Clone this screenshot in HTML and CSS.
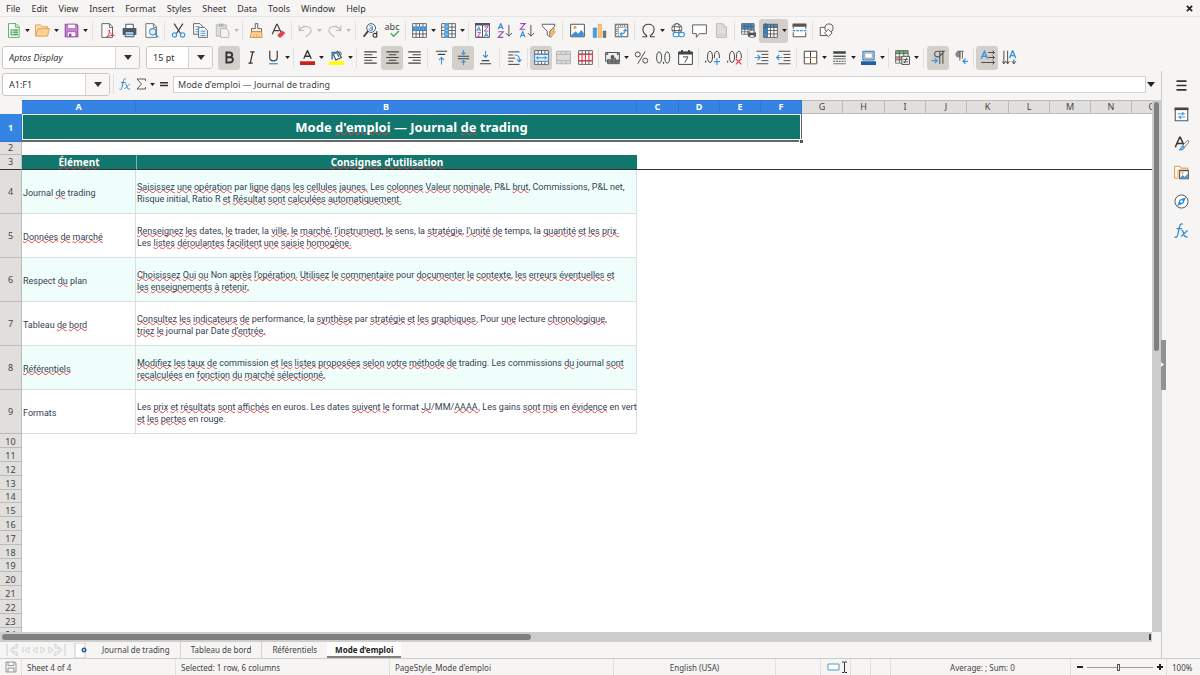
FILE: index.html
```html
<!DOCTYPE html>
<html lang="fr">
<head>
<meta charset="utf-8">
<title>Journal de trading</title>
<link rel="stylesheet" href="styles.css">
</head>
<body>
<svg class="defs" aria-hidden="true">
<symbol id="caret" viewBox="0 0 8 5"><path d="M0 0h8L4 5z" fill="currentColor"/></symbol>
<symbol id="new" viewBox="0 0 24 24"><path d="M4 1h12l5 5v17H4z" fill="#fff" stroke="#56b264" stroke-width="1.6"/><path d="M15 1v6h6" fill="#c9ebce" stroke="#56b264" stroke-width="1.4"/><path d="M7 10h12v10H7z" fill="#56a562"/><path d="M7 13h12M7 16.500h12M11 10v10" stroke="#fff"/></symbol>
<symbol id="open" viewBox="0 0 24 24"><path d="M1 21V3h8l2 3h9v4" fill="#fbe0b4" stroke="#e0a050" stroke-width="1.5"/><path d="M1 21 5 9h18l-3 12z" fill="#fcd191" stroke="#e0a050" stroke-width="1.5"/></symbol>
<symbol id="save" viewBox="0 0 24 24"><path d="M2 2h18l2 2v18H2z" fill="#c58ad0" stroke="#9c4bab" stroke-width="1.8"/><path d="M6 2h12v7H6z" fill="#fff" stroke="#9c4bab"/><path d="M5 14h14v8H5z" fill="#fff" stroke="#9c4bab" stroke-width="1.4"/><path d="M8 17v5h4v-5z" fill="#9c4bab"/></symbol>
<symbol id="pdf" viewBox="0 0 24 24"><path d="M3 1h12l5 5v17H3z" fill="#fcfcfc" stroke="#555" stroke-width="1.4"/><path d="M15 1v6h5" fill="none" stroke="#555" stroke-width="1.4"/><path d="M10 23c4-3 6-8 5-12-2 0 0 7 8 9-4-1-9 0-13 3" fill="#fff" stroke="#e0394a" stroke-width="1.5"/></symbol>
<symbol id="print" viewBox="0 0 24 24"><path d="M6 2h12v7H6z" fill="#fff" stroke="#4b5a66" stroke-width="1.6"/><path d="M1 8h22v11H1z" fill="#4b5a66"/><path d="M5 14h14v8H5z" fill="#d7ecfb" stroke="#374550" stroke-width="1.5"/><path d="M6 18h12" stroke="#3a8cd0" stroke-width="2"/></symbol>
<symbol id="preview" viewBox="0 0 24 24"><path d="M3 1h12l5 5v17H3z" fill="#fcfcfc" stroke="#666" stroke-width="1.4"/><path d="M15 1v6h5" fill="none" stroke="#666" stroke-width="1.4"/><circle cx="14" cy="14" r="5" fill="#e3f1fb" stroke="#3f94d2" stroke-width="1.7"/><path d="m18 18 5 5" stroke="#3f94d2" stroke-width="2"/></symbol>
<symbol id="cut" viewBox="0 0 24 24"><path d="m5 1 11 17M19 1 8 18" stroke="#444" stroke-width="2"/><circle cx="5.500" cy="19" r="3.500" fill="none" stroke="#3f94d2" stroke-width="1.8"/><circle cx="18.500" cy="19" r="3.500" fill="none" stroke="#3f94d2" stroke-width="1.8"/></symbol>
<symbol id="copy" viewBox="0 0 24 24"><path d="M1 1h10l4 4v13H1z" fill="#fff" stroke="#555" stroke-width="1.4"/><path d="M4 6h6M4 10h4M4 14h4" stroke="#3f94d2" stroke-width="1.6"/><path d="M9 7h9l5 5v11H9z" fill="#fff" stroke="#555" stroke-width="1.4"/><path d="M12 13h8M12 16.500h8M12 20h8" stroke="#3f94d2" stroke-width="1.6"/></symbol>
<symbol id="paste" viewBox="0 0 24 24"><path d="M2 3h16v18H2z" fill="#ddd" stroke="#b5b5b5" stroke-width="1.5"/><path d="M6 1h8v5H6z" fill="#b5b5b5"/><path d="M9 9h9l4 4v10H9z" fill="#f3f3f3" stroke="#b5b5b5" stroke-width="1.5"/></symbol>
<symbol id="clone" viewBox="0 0 24 24"><path d="M10 1h4v8h6v5H4V9h6z" fill="#f7f7f7" stroke="#555" stroke-width="1.4"/><path d="M4 14h16l1 9H2z" fill="#fbd9a5" stroke="#de8e31" stroke-width="1.5"/><path d="M8 23v-5m4 5v-5m4 5v-5" stroke="#de8e31"/></symbol>
<symbol id="clear" viewBox="0 0 24 24"><path d="m2 18 7-16h1l6 13M5 12h8" fill="none" stroke="#444" stroke-width="2"/><path d="m10 19 8-7 5 4-7 7h-3z" fill="#e9414b"/></symbol>
<symbol id="undo" viewBox="0 0 24 24"><path d="M2 4v8h8M3 11C8 3 20 4 21 12c0 5-5 7-9 10" fill="none" stroke="currentColor" stroke-width="1.8"/></symbol>
<symbol id="redo" viewBox="0 0 24 24"><path d="M22 4v8h-8M21 11C16 3 4 4 3 12c0 5 5 7 9 10" fill="none" stroke="currentColor" stroke-width="1.8"/></symbol>
<symbol id="grid" viewBox="0 0 24 24"><path d="M1 1h22v22H1z" fill="#fff"/><path d="M1 1h22v22H1zM1 6.500h22M1 12h22M1 17.500h22M6.500 1v22M12 1v22M17.500 1v22" fill="none" stroke="#555" stroke-width="1.4"/></symbol>
<symbol id="row" viewBox="0 0 24 24"><use href="#grid"/><path d="M0 6h24v6H0z" fill="#3b94dd"/><path d="M6 6v6M12 6v6M18 6v6" stroke="#79b8ea"/></symbol>
<symbol id="col" viewBox="0 0 24 24"><use href="#grid"/><path d="M6 0h6v24H6z" fill="#4fa2e2"/><path d="M6 6h6M6 12h6M6 18h6" stroke="#b4dafa"/></symbol>
<symbol id="sort" viewBox="0 0 24 24"><path d="M1 1h22v22H1zM12 1v22" fill="#fff" stroke="#555" stroke-width="1.6"/><path d="M0 0h24v4H0z" fill="#555"/><g fill="none" stroke-width="1.5"><path d="m3 13 3-7 3 7M4 11h4M15 22l3-7 3 7m-5-2h4" stroke="#2f8bd3"/><path d="M4 15h5l-5 7h5M15 6h6l-6 7h6" stroke="#a444b2"/></g></symbol>
<symbol id="asc" viewBox="0 0 24 24"><path d="m2 10 4-9 4 9M3 7h6" fill="none" stroke="#2f8bd3" stroke-width="1.8"/><path d="M2 14h8L2 23h8" fill="none" stroke="#a444b2" stroke-width="1.8"/><path d="M19 3v18m-5-5 5 5 5-5" fill="none" stroke="#555" stroke-width="1.6"/></symbol>
<symbol id="desc" viewBox="0 0 24 24"><path d="m2 23 4-9 4 9M3 20h6" fill="none" stroke="#2f8bd3" stroke-width="1.8"/><path d="M2 1h8l-8 9h8" fill="none" stroke="#a444b2" stroke-width="1.8"/><path d="M19 3v18m-5-5 5 5 5-5" fill="none" stroke="#555" stroke-width="1.6"/></symbol>
<symbol id="filter" viewBox="0 0 24 24"><path d="M2 2h20v3l-8 8v9l-4-3v-6L2 5z" fill="#fff" stroke="#555" stroke-width="1.5"/><path d="m18 9-4 8h4l-3 7 8-10h-4l3-5z" fill="#f8c98b" stroke="#e08a2a" stroke-width="1.200"/></symbol>
<symbol id="image" viewBox="0 0 24 24"><path d="M1 2h22v20H1z" fill="#fff" stroke="#555" stroke-width="1.6"/><path d="m2 19 7-6 4 4 5-6 4 5v5H2z" fill="#3b94dd"/><circle cx="8" cy="7" r="2.500" fill="#f0a244"/></symbol>
<symbol id="chart" viewBox="0 0 24 24"><path d="M2 8h5v15H2z" fill="#4fa2e2" stroke="#2a7ab9"/><path d="M10 2h5v21h-5z" fill="#f9c988" stroke="#e29434"/><path d="M18 13h4v10h-4z" fill="#777" stroke="#444"/></symbol>
<symbol id="pivot" viewBox="0 0 24 24"><path d="M2 2h20v20H2z" fill="#fff" stroke="#555" stroke-width="1.6"/><path d="M7 2v20M2 7h20" stroke="#777"/><path d="M3 3h3M9 4.500h11M4.500 9v11" stroke="#888" stroke-width="3" stroke-dasharray="2 1.5"/><path d="M10 18c5 0 8-3 8-8m-3 3 3-3 3 3m-8 2-3 3 3 3" fill="none" stroke="#3b94dd" stroke-width="1.8"/></symbol>
<symbol id="omega" viewBox="0 0 24 24"><path d="M2 22h7v-2C4 17 3 13 3 10c0-5 4-8 9-8s9 3 9 8c0 3-1 7-6 10v2h7" fill="none" stroke="#444" stroke-width="1.8"/></symbol>
<symbol id="link" viewBox="0 0 24 24"><circle cx="11" cy="9" r="8" fill="#fff" stroke="#555" stroke-width="1.400"/><ellipse cx="11" cy="9" rx="4" ry="8" fill="none" stroke="#555" stroke-width="1.400"/><path d="M3 6h16M3 12h16" stroke="#555" stroke-width="1.400"/><rect x="5" y="15" width="10" height="7" rx="3.500" fill="#fff" stroke="#3b94dd" stroke-width="1.800"/><rect x="14" y="15" width="9" height="7" rx="3.500" fill="#fff" stroke="#3b94dd" stroke-width="1.800"/></symbol>
<symbol id="comment" viewBox="0 0 24 24"><path d="M1 3h22v14H12l-5 6v-6H1z" fill="#fff" stroke="#555" stroke-width="1.500"/></symbol>
<symbol id="page" viewBox="0 0 24 24"><path d="M4 1h10l6 6v16H4z" fill="#ddd" stroke="#bbb" stroke-width="1.500"/><path d="M14 1v6h6M4 19h16" fill="none" stroke="#bbb"/></symbol>
<symbol id="printarea" viewBox="0 0 24 24"><path d="M1 1h20v17H1z" fill="#fff"/><path d="M1 1h20v9H1z" fill="#3b94dd"/><path d="M1 1h20v17H1zM1 5.500h20M1 10h20M1 14h20M6 1v17M11 1v17M16 1v17" fill="none" stroke="#555" stroke-width="1.200"/><path d="M11 15h13v7H11z" fill="#4b5a66"/><path d="M14 12h7v4h-7zM14 19h7v4h-7z" fill="#fff" stroke="#444"/></symbol>
<symbol id="freeze" viewBox="0 0 24 24"><path d="M1 2h22v21H1z" fill="#fff"/><path d="M1 2h22v5H1zM1 2h6v21H1z" fill="#3b94dd"/><path d="M7 12h16M7 17.500h16M12 2v21M17.500 2v21M1 2h22v21H1zM7 2v21M1 7h22" fill="none" stroke="#555" stroke-width="1.400"/><path d="m1 7 6 6m-6 0 6 5M4 0v7" stroke="#1961a0" stroke-width="1.400"/></symbol>
<symbol id="split" viewBox="0 0 24 24"><path d="M2 9V2h20v7M2 15v7h20v-7" fill="#fff" stroke="#555" stroke-width="1.600"/><path d="M1 1h22v5H1z" fill="#555"/><path d="M1 12h22" stroke="#3b94dd" stroke-width="2" stroke-dasharray="4 2"/></symbol>
<symbol id="shapes" viewBox="0 0 24 24"><path d="M2 7h13v13H2z" fill="#fff" stroke="#555" stroke-width="1.500"/><circle cx="16" cy="8" r="6.500" fill="#f6f5f4" stroke="#555" stroke-width="1.500"/><path d="m15 10 6 6-6 6-6-6z" fill="#fff" stroke="#555" stroke-width="1.500"/></symbol>
<symbol id="bold" viewBox="0 0 24 24"><path d="M7 4v16h5c7 0 7-8 1-8.500C18 10 17 4 12 4zM7 11.500h6" fill="none" stroke="#333" stroke-width="3"/></symbol>
<symbol id="italic" viewBox="0 0 24 24"><path d="M10 3h7M7 21h7m0-18-4 18" stroke="#333" stroke-width="2"/></symbol>
<symbol id="under" viewBox="0 0 24 24"><path d="M6 1v11c0 7 12 7 12 0V1" fill="none" stroke="#444" stroke-width="2"/><path d="M5 22h14" stroke="#3b94dd" stroke-width="2"/></symbol>
<symbol id="fcolor" viewBox="0 0 24 24"><path d="m6 14 6-13 6 13M8 10h8" fill="none" stroke="#333" stroke-width="2.200"/><path d="M0 18h24v6H0z" fill="#c9211e"/></symbol>
<symbol id="hcolor" viewBox="0 0 24 24"><path d="m7 7 7-5 6 10-9 4z" fill="#fff" stroke="#444" stroke-width="1.700"/><path d="M5 15V4h7l4 7" fill="none" stroke="#2174b8" stroke-width="2.200"/><path d="M15 5c3-4 5-1 4 3" fill="none" stroke="#444" stroke-width="1.500"/><path d="M0 18h24v6H0z" fill="#ff0"/></symbol>
<symbol id="left" viewBox="0 0 24 24"><path d="M2 3h20M2 7.500h13M2 12h20M2 16.500h13M2 21h20" stroke="#444" stroke-width="1.700"/></symbol>
<symbol id="center" viewBox="0 0 24 24"><path d="M2 3h20M6 7.500h12M2 12h20M6 16.500h12M2 21h20" stroke="#444" stroke-width="1.700"/></symbol>
<symbol id="right" viewBox="0 0 24 24"><path d="M2 3h20M9 7.500h13M2 12h20M9 16.500h13M2 21h20" stroke="#444" stroke-width="1.700"/></symbol>
<symbol id="vtop" viewBox="0 0 24 24"><path d="M3 2h18M6 7h12" stroke="#444" stroke-width="1.700"/><path d="M12 23V12m-4 4 4-4 4 4" fill="none" stroke="#3b94dd" stroke-width="1.700"/></symbol>
<symbol id="vmid" viewBox="0 0 24 24"><path d="M3 10h18M3 14h18" stroke="#444" stroke-width="1.700"/><path d="M12 0v7M9 4l3 3 3-3m-3 20v-7m-3 3 3-3 3 3" fill="none" stroke="#3b94dd" stroke-width="1.700"/></symbol>
<symbol id="vbot" viewBox="0 0 24 24"><path d="M6 17h12M3 22h18" stroke="#444" stroke-width="1.700"/><path d="M12 1v11M8 8l4 4 4-4" fill="none" stroke="#3b94dd" stroke-width="1.700"/></symbol>
<symbol id="wraptext" viewBox="0 0 24 24"><path d="M2 3h18M2 8h8M2 13h11M2 18h8M2 23h18" stroke="#444" stroke-width="1.600"/><path d="M12 8c7 0 8 3 8 10m-4-3 4 4 3-4" fill="none" stroke="#3b94dd" stroke-width="1.900"/></symbol>
<symbol id="merge" viewBox="0 0 24 24"><use href="#grid"/><path d="M1 7h22v11H1z" fill="#e7f3fc" stroke="#2f8bd3" stroke-width="1.500"/><path d="M4 12.500h16M7 10l-3 2.500L7 15m10-5 3 2.500-3 2.500" fill="none" stroke="#2f8bd3" stroke-width="1.600"/></symbol>
<symbol id="mergeoff" viewBox="0 0 24 24"><path d="M1 2h22v20H1z" fill="#ddd"/><path d="M1 2h22v20H1zM1 7h22M1 17h22M8 2v5m8-5v5M8 17v5m8-5v5" fill="none" stroke="#b3b3b3" stroke-width="1.600"/></symbol>
<symbol id="unmerge" viewBox="0 0 24 24"><use href="#grid"/><path d="M1 7h22v10H1zM6.500 7v10M12 7v10M17.500 7v10" fill="#fff" stroke="#d8434d" stroke-width="1.900"/></symbol>
<symbol id="money" viewBox="0 0 24 24"><path d="M1 4h22v14H1z" fill="#eee" stroke="#555" stroke-width="1.600"/><path d="M2 5h3v3H2zM19 5h3v3h-3z" fill="#555"/><circle cx="12" cy="11" r="3" fill="#555"/><path d="M4 15h7v7H4zM12 13h5v9h-5zM18 16h5v6h-5z" fill="#777" stroke="#444"/></symbol>
<symbol id="percent" viewBox="0 0 24 24"><circle cx="6" cy="7" r="4" fill="none" stroke="#444" stroke-width="1.500"/><circle cx="18" cy="17" r="4" fill="none" stroke="#444" stroke-width="1.500"/><path d="M18 2 6 22" stroke="#444" stroke-width="1.500"/></symbol>
<symbol id="number" viewBox="0 0 24 24"><ellipse cx="5" cy="12" rx="4" ry="9" fill="none" stroke="#444" stroke-width="1.600"/><ellipse cx="18" cy="12" rx="4" ry="9" fill="none" stroke="#444" stroke-width="1.600"/><path d="M11 19h2v3h-2z" fill="#444"/></symbol>
<symbol id="date" viewBox="0 0 24 24"><path d="M1 3h22v20H1z" fill="#fff" stroke="#444" stroke-width="1.600"/><path d="M1 3h22v4H1zM5 0h3v4H5zM16 0h3v4h-3z" fill="#444"/><path d="M8 11h8l-5 9" fill="none" stroke="#444" stroke-width="1.600"/></symbol>
<symbol id="decs" viewBox="0 0 24 24"><path d="M0 17h2v3H0z" fill="#444"/><path d="M4 11c0-12 8-12 8 0s-8 12-8 0zM15 11c0-12 8-12 8 0s-8 12-8 0z" fill="none" stroke="#444" stroke-width="1.600"/></symbol>
<symbol id="decadd" viewBox="0 0 24 24"><use href="#decs"/><path d="M13 13h11v11H13z" fill="#f6f5f4"/><path d="M19 13v11m-5-5.500h10" stroke="#3b94dd" stroke-width="1.900"/></symbol>
<symbol id="decdel" viewBox="0 0 24 24"><use href="#decs"/><path d="M13 13h11v11H13z" fill="#f6f5f4"/><path d="m14 14 9 9m0-9-9 9" stroke="#e0394a" stroke-width="1.900"/></symbol>
<symbol id="indent" viewBox="0 0 24 24"><path d="M4 2h19M12 7h11M12 12h11M12 17h11M4 22h19" stroke="#444" stroke-width="1.500"/><path d="M1 12h8M6 8l4 4-4 4" fill="none" stroke="#3b94dd" stroke-width="1.800"/></symbol>
<symbol id="outdent" viewBox="0 0 24 24"><path d="M4 2h19M12 7h11M12 12h11M12 17h11M4 22h19" stroke="#444" stroke-width="1.500"/><path d="M2 12h8M5 8l-4 4 4 4" fill="none" stroke="#3b94dd" stroke-width="1.800"/></symbol>
<symbol id="borders" viewBox="0 0 24 24"><path d="M2 2h20v20H2z" fill="#fff" stroke="#444" stroke-width="1.600"/><path d="M12 2v20M2 12h20" stroke="#444" stroke-width="1.600"/><path d="M3 12h18M2 22h20" stroke="#e29b46" stroke-width="1.200"/></symbol>
<symbol id="lines" viewBox="0 0 24 24"><path d="M2 2h20v4H2z" fill="#444"/><path d="M2 10h20" stroke="#444" stroke-width="2"/><path d="M2 14h20" stroke="#555" stroke-width="1.400"/><path d="M2 18h20" stroke="#444" stroke-width="1.600" stroke-dasharray="3 1.500"/><path d="M2 22h20" stroke="#777" stroke-width="1.600"/></symbol>
<symbol id="lcolor" viewBox="0 0 24 24"><path d="M3 2h18v14H3z" fill="#a7cff0" stroke="#3a78a8" stroke-width="1.600"/><path d="M6 5h12v8H6z" fill="#fff" stroke="#888"/><path d="M0 18h24v6H0z" fill="#21609f"/></symbol>
<symbol id="cond" viewBox="0 0 24 24"><path d="M1 1h20v20H1z" fill="#fff"/><path d="M1 1h20v5H1z" fill="#69b376"/><path d="M1 11h20v5H1z" fill="#f1999b"/><path d="M1 1h20v20H1zM1 6h20M1 11h20M1 16h20M7 1v20M14 1v20" fill="none" stroke="#555" stroke-width="1.300"/><path d="M11 10h12v13H11z" fill="#fff" stroke="#444" stroke-width="1.500"/><path d="M13 15h8m-8 4h8m-2-7-4 9" stroke="#333" stroke-width="1.300"/></symbol>
<symbol id="ltr" viewBox="0 0 24 24"><path d="M21 2H11c-7 0-7 9 0 9h2zM14 2v20M19 2v20" fill="none" stroke="#555" stroke-width="1.800"/><path d="M1 17h9m-4-4 4 4-4 4" fill="none" stroke="#3b94dd" stroke-width="2"/></symbol>
<symbol id="rtl" viewBox="0 0 24 24"><path d="M12 2v10H9c-7 0-7-10 0-10z" fill="#888"/><path d="M7 2h10M11 2v15M15 2v12" fill="none" stroke="#666" stroke-width="1.600"/><path d="M24 18h-8m4-4-4 4 4 4" fill="none" stroke="#3b94dd" stroke-width="2"/></symbol>
<symbol id="horiz" viewBox="0 0 24 24"><path d="m2 14 5-12 5 12M4 10h6" fill="none" stroke="#3b94dd" stroke-width="2.200"/><path d="M13 4h10m-3-3 3 3-3 3M13 12h10m-3-3 3 3-3 3M2 20h21m-3-3 3 3-3 3" fill="none" stroke="#444" stroke-width="1.500"/></symbol>
<symbol id="vert" viewBox="0 0 24 24"><path d="m12 13 5-12 5 12m-8-4h6" fill="none" stroke="#3b94dd" stroke-width="2.200"/><path d="M3 1v21m-3-4 3 4 3-4M9 1v21m-3-4 3 4 3-4M19 15v7m-3-4 3 4 3-4" fill="none" stroke="#444" stroke-width="1.500"/></symbol>
<symbol id="fx" viewBox="0 0 24 24"><path d="M14 2c-4-2-5 2-6 8l-2 9c-1 4-3 5-5 3M4 9h9" fill="none" stroke="#2f8bd3" stroke-width="2"/><path d="M12 12c4-1 3 10 7 10h3M22 12c-3 0-8 10-11 9" fill="none" stroke="#2f8bd3" stroke-width="2"/></symbol>
<symbol id="sigma" viewBox="0 0 24 24"><path d="M21 6V2H4l9 10-9 10h17v-4" fill="none" stroke="#444" stroke-width="1.700"/></symbol>
<symbol id="equal" viewBox="0 0 24 24"><path d="M4 9.500h16M4 15h16" stroke="#333" stroke-width="2.600"/></symbol>
<symbol id="burger" viewBox="0 0 24 24"><path d="M4 5h16M4 12h16M4 19h16" stroke="#333" stroke-width="2.600"/></symbol>
<symbol id="props" viewBox="0 0 24 24"><path d="M2 2h20v20H2z" fill="#fff" stroke="#555" stroke-width="1.700"/><path d="M1 1h22v4H1z" fill="#444"/><path d="M6 11h12M6 16h12" stroke="#3b94dd" stroke-width="1.500"/><path d="M14 8v5M10 14v5" stroke="#3b94dd" stroke-width="2"/></symbol>
<symbol id="styles" viewBox="0 0 24 24"><path d="m2 18 7-16h1l6 13M5 12h8" fill="none" stroke="#333" stroke-width="2.400"/><path d="m14 15 8-8c2 0 2 3 0 5l-5 6z" fill="#fff" stroke="#555" stroke-width="1.300"/><path d="M8 22c4 0 2-6 7-6 4 4-2 8-7 6z" fill="#7ab8e8" stroke="#2f7fc0" stroke-width="1.300"/></symbol>
<symbol id="gallery" viewBox="0 0 24 24"><path d="M1 21V2h8l2 3h11v3H6v13z" fill="#fff" stroke="#e08a3a" stroke-width="1.500"/><path d="M5 8h4v14H5z" fill="#fad299"/><path d="M9 9h14v13H9z" fill="#fff" stroke="#555" stroke-width="1.700"/><path d="m10 20 4-4 3 3 5-5v7H10z" fill="#3b94dd"/><path d="M12 11h3v3h-3z" fill="#f0a244"/></symbol>
<symbol id="navig" viewBox="0 0 24 24"><circle cx="12" cy="12" r="10.500" fill="#fff" stroke="#555" stroke-width="1.600"/><path d="m19 5-4 10-10 4L9 9z" fill="#2f8bd3"/><circle cx="12" cy="12" r="2" fill="#fff"/></symbol>
<symbol id="disk" viewBox="0 0 24 24"><path d="M2 2h18l2 2v18H2zM6 2v7h12V2M6 22v-8h12v8" fill="#f6f5f4" stroke="#8a8a8a" stroke-width="1.700"/></symbol>
<symbol id="addsheet" viewBox="0 0 13 15"><path d="M1 0h10v15H1z" fill="#fff" stroke="#c9c9c9"/><circle cx="10" cy="7" r="2.500" fill="#2d5f9e"/><path d="M9 7h2m-1-1v2" stroke="#dbe9f7"/></symbol>
<symbol id="navs" viewBox="0 0 62 14"><path d="M2 1v12M12 1 5 7l7 6V9H8V5h4zM18 4v6M24 4l-4 3 4 3zM32 4l-4 3 4 3zM36 4l4 3-4 3zM44 4l4 3-4 3zM50 1l7 6-7 6V9h4V5h-4zM60 1v12" fill="#fafafa" stroke="#d0d0d0"/></symbol>
</svg>

<header class="chrome">
  <nav class="menubar" aria-label="Menu">
    <button>File</button><button>Edit</button><button>View</button><button>Insert</button><button>Format</button><button>Styles</button><button>Sheet</button><button>Data</button><button>Tools</button><button>Window</button><button>Help</button>
    <button class="close" aria-label="Close"><svg viewBox="0 0 8 8"><path d="m1 1 6 6m0-6-6 6" stroke="#222" stroke-width="2"/></svg></button>
  </nav>
  <div class="toolbar" role="toolbar" aria-label="Standard">
    <button class="tool" aria-label="New"><svg><use href="#new"/></svg></button><button class="drop" aria-label="New options"><svg><use href="#caret"/></svg></button>
    <button class="tool" aria-label="Open"><svg><use href="#open"/></svg></button><button class="drop" aria-label="Open options"><svg><use href="#caret"/></svg></button>
    <button class="tool" aria-label="Save"><svg><use href="#save"/></svg></button><button class="drop" aria-label="Save options"><svg><use href="#caret"/></svg></button>
    <span class="sep wide"></span>
    <button class="tool" aria-label="Export PDF"><svg><use href="#pdf"/></svg></button>
    <button class="tool" aria-label="Print"><svg><use href="#print"/></svg></button>
    <button class="tool" aria-label="Print preview"><svg><use href="#preview"/></svg></button>
    <span class="sep"></span>
    <button class="tool" aria-label="Cut"><svg><use href="#cut"/></svg></button>
    <button class="tool" aria-label="Copy"><svg><use href="#copy"/></svg></button>
    <button class="tool" aria-label="Paste" disabled><svg><use href="#paste"/></svg></button><button class="drop" aria-label="Paste options" disabled><svg><use href="#caret"/></svg></button>
    <span class="sep"></span>
    <button class="tool" aria-label="Clone formatting"><svg><use href="#clone"/></svg></button>
    <button class="tool" aria-label="Clear formatting"><svg><use href="#clear"/></svg></button>
    <span class="sep"></span>
    <button class="tool" aria-label="Undo" disabled><svg><use href="#undo"/></svg></button><button class="drop" aria-label="Undo list" disabled><svg><use href="#caret"/></svg></button>
    <button class="tool" aria-label="Redo" disabled><svg><use href="#redo"/></svg></button><button class="drop" aria-label="Redo list" disabled><svg><use href="#caret"/></svg></button>
    <span class="sep wide"></span>
    <button class="tool" aria-label="Find and replace"><svg viewBox="0 0 24 24"><circle cx="13" cy="8" r="7" fill="#fff" stroke="#555" stroke-width="1.6"/><path d="m8 13-7 9" stroke="#444" stroke-width="3"/><path d="M10 5c2-1 5-1 5 1v6M15 8c-6-1-6 4-3 4 2 0 3-1 3-3" fill="none" stroke="#3088d0" stroke-width="1.600"/><path d="M22 13v10M22 18c-3-3-6-1-6 2s4 4 6 1" fill="none" stroke="#333" stroke-width="1.800"/></svg></button>
    <button class="tool spell" aria-label="Spelling"><span>abc</span><svg viewBox="0 0 24 12"><path d="m9 4 5 5 9-9" fill="none" stroke="#3fae5a" stroke-width="2.400"/></svg></button>
    <span class="sep"></span>
    <button class="tool" aria-label="Row"><svg><use href="#row"/></svg></button><button class="drop" aria-label="Row options"><svg><use href="#caret"/></svg></button>
    <button class="tool" aria-label="Column"><svg><use href="#col"/></svg></button><button class="drop" aria-label="Column options"><svg><use href="#caret"/></svg></button>
    <span class="sep"></span>
    <button class="tool" aria-label="Sort"><svg><use href="#sort"/></svg></button>
    <button class="tool" aria-label="Sort ascending"><svg><use href="#asc"/></svg></button>
    <button class="tool" aria-label="Sort descending"><svg><use href="#desc"/></svg></button>
    <button class="tool" aria-label="AutoFilter"><svg><use href="#filter"/></svg></button>
    <span class="sep wide"></span>
    <button class="tool" aria-label="Insert image"><svg><use href="#image"/></svg></button>
    <button class="tool" aria-label="Insert chart"><svg><use href="#chart"/></svg></button>
    <button class="tool" aria-label="Pivot table"><svg><use href="#pivot"/></svg></button>
    <span class="sep"></span>
    <button class="tool" aria-label="Special character"><svg><use href="#omega"/></svg></button><button class="drop" aria-label="Character list"><svg><use href="#caret"/></svg></button>
    <button class="tool" aria-label="Hyperlink"><svg><use href="#link"/></svg></button>
    <button class="tool" aria-label="Comment"><svg><use href="#comment"/></svg></button>
    <button class="tool" aria-label="Headers and footers" disabled><svg><use href="#page"/></svg></button>
    <span class="sep"></span>
    <button class="tool" aria-label="Print area"><svg><use href="#printarea"/></svg></button>
    <span class="pair on"><button class="tool" aria-label="Freeze"><svg><use href="#freeze"/></svg></button><button class="drop" aria-label="Freeze options"><svg><use href="#caret"/></svg></button></span>
    <button class="tool" aria-label="Split window"><svg><use href="#split"/></svg></button>
    <span class="sep"></span>
    <button class="tool" aria-label="Draw functions"><svg><use href="#shapes"/></svg></button>
  </div>
  <div class="toolbar" role="toolbar" aria-label="Formatting">
    <div class="combo font"><input aria-label="Font name" value="Aptos Display"><button aria-label="Font list"><svg><use href="#caret"/></svg></button></div>
    <div class="combo size"><input aria-label="Font size" value="15 pt"><button aria-label="Size list"><svg><use href="#caret"/></svg></button></div>
    <button class="tool on" aria-label="Bold"><svg><use href="#bold"/></svg></button>
    <button class="tool" aria-label="Italic"><svg><use href="#italic"/></svg></button>
    <button class="tool" aria-label="Underline"><svg><use href="#under"/></svg></button><button class="drop" aria-label="Underline styles"><svg><use href="#caret"/></svg></button>
    <span class="sep"></span>
    <button class="tool" aria-label="Font color"><svg><use href="#fcolor"/></svg></button><button class="drop" aria-label="Font colors"><svg><use href="#caret"/></svg></button>
    <button class="tool" aria-label="Background color"><svg><use href="#hcolor"/></svg></button><button class="drop" aria-label="Background colors"><svg><use href="#caret"/></svg></button>
    <span class="sep"></span>
    <button class="tool" aria-label="Align left"><svg><use href="#left"/></svg></button>
    <button class="tool on" aria-label="Align center"><svg><use href="#center"/></svg></button>
    <button class="tool" aria-label="Align right"><svg><use href="#right"/></svg></button>
    <span class="sep"></span>
    <button class="tool" aria-label="Align top"><svg><use href="#vtop"/></svg></button>
    <button class="tool on" aria-label="Center vertically"><svg><use href="#vmid"/></svg></button>
    <button class="tool" aria-label="Align bottom"><svg><use href="#vbot"/></svg></button>
    <span class="sep wide"></span>
    <button class="tool" aria-label="Wrap text"><svg><use href="#wraptext"/></svg></button>
    <span class="sep"></span>
    <button class="tool on" aria-label="Merge and center"><svg><use href="#merge"/></svg></button>
    <button class="tool" aria-label="Merge cells" disabled><svg><use href="#mergeoff"/></svg></button>
    <button class="tool" aria-label="Unmerge cells"><svg><use href="#unmerge"/></svg></button>
    <span class="sep"></span>
    <button class="tool" aria-label="Currency"><svg><use href="#money"/></svg></button><button class="drop" aria-label="Currencies"><svg><use href="#caret"/></svg></button>
    <button class="tool" aria-label="Percent"><svg><use href="#percent"/></svg></button>
    <button class="tool" aria-label="Number"><svg><use href="#number"/></svg></button>
    <button class="tool" aria-label="Date"><svg><use href="#date"/></svg></button>
    <span class="sep"></span>
    <button class="tool" aria-label="Add decimal"><svg><use href="#decadd"/></svg></button>
    <button class="tool" aria-label="Delete decimal"><svg><use href="#decdel"/></svg></button>
    <span class="sep"></span>
    <button class="tool" aria-label="Increase indent"><svg><use href="#indent"/></svg></button>
    <button class="tool" aria-label="Decrease indent"><svg><use href="#outdent"/></svg></button>
    <span class="sep"></span>
    <button class="tool" aria-label="Borders"><svg><use href="#borders"/></svg></button><button class="drop" aria-label="Border list"><svg><use href="#caret"/></svg></button>
    <button class="tool" aria-label="Border style"><svg><use href="#lines"/></svg></button><button class="drop" aria-label="Border styles"><svg><use href="#caret"/></svg></button>
    <button class="tool" aria-label="Border color"><svg><use href="#lcolor"/></svg></button><button class="drop" aria-label="Border colors"><svg><use href="#caret"/></svg></button>
    <span class="sep"></span>
    <button class="tool" aria-label="Conditional"><svg><use href="#cond"/></svg></button><button class="drop" aria-label="Conditions"><svg><use href="#caret"/></svg></button>
    <span class="sep wide"></span>
    <button class="tool on" aria-label="Left to right"><svg><use href="#ltr"/></svg></button>
    <button class="tool" aria-label="Right to left"><svg><use href="#rtl"/></svg></button>
    <span class="sep"></span>
    <button class="tool on" aria-label="Horizontal text"><svg><use href="#horiz"/></svg></button>
    <button class="tool" aria-label="Vertical text"><svg><use href="#vert"/></svg></button>
  </div>
</header>

<div class="work">
  <main class="main">
    <div class="formulabar">
      <div class="combo name"><input aria-label="Name box" value="A1:F1"><button aria-label="Names"><svg><use href="#caret"/></svg></button></div>
      <span class="sep wide"></span>
      <button class="ftool" aria-label="Function wizard"><svg><use href="#fx"/></svg></button>
      <button class="ftool" aria-label="Select function"><svg><use href="#sigma"/></svg></button><button class="drop" aria-label="Functions"><svg><use href="#caret"/></svg></button>
      <button class="ftool" aria-label="Formula"><svg><use href="#equal"/></svg></button>
      <input class="formula" aria-label="Input line" value="Mode d’emploi — Journal de trading">
      <button class="expand" aria-label="Expand"><svg><use href="#caret"/></svg></button>
    </div>
    <div class="gridrow">
      <div class="sheet">
        <table class="cells">
          <colgroup><col class="c-head"><col class="c-a"><col class="c-b"><col class="c-w"><col class="c-n"><col class="c-n"><col class="c-n"><col class="c-n"><col class="c-w"><col class="c-n"><col class="c-n"><col class="c-w"><col class="c-n"><col class="c-n"><col class="c-n"><col class="c-n"></colgroup>
          <thead><tr><td class="corner"></td><th class="sel">A</th><th class="sel">B</th><th class="sel">C</th><th class="sel">D</th><th class="sel">E</th><th class="sel">F</th><th>G</th><th>H</th><th>I</th><th>J</th><th>K</th><th>L</th><th>M</th><th>N</th><th>O</th></tr></thead>
          <tbody class="frozen">
            <tr class="r1"><th class="sel">1</th><td colspan="6" class="title"><div class="cursor">Mode <u>d'emploi</u> — Journal <u>de</u> trading<span class="handle"></span></div></td><td colspan="9"></td></tr>
            <tr class="r2"><th>2</th><td colspan="15"></td></tr>
            <tr class="r3"><th>3</th><td class="head"><u>Élément</u></td><td class="head"><u>Consignes</u> <u>d’utilisation</u></td><td colspan="13"></td></tr>
          </tbody>
          <tbody class="data">
            <tr><th>4</th><td>Journal <u>de</u> trading</td><td><u>Saisissez</u> <u>une</u> <u>opération</u> par <u>ligne</u> <u>dans</u> <u>les</u> <u>cellules</u> <u>jaunes.</u> Les <u>colonnes</u> <u>Valeur</u> <u>nominale</u>, P&amp;L <u>brut</u>, Commissions, P&amp;L net,<br>Risque initial, Ratio R <u>et</u> <u>Résultat</u> <u>sont</u> <u>calculées</u> <u>automatiquement.</u></td></tr>
            <tr><th>5</th><td><u>Données</u> <u>de</u> <u>marché</u></td><td><u>Renseignez</u> <u>les</u> dates, <u>le</u> trader, la <u>ville</u>, <u>le</u> <u>marché</u>, <u>l’instrument</u>, <u>le</u> sens, la <u>stratégie</u>, <u>l’unité</u> <u>de</u> temps, la <u>quantité</u> <u>et</u> <u>les</u> <u>prix.</u><br>Les <u>listes</u> <u>déroulantes</u> <u>facilitent</u> <u>une</u> <u>saisie</u> <u>homogène.</u></td></tr>
            <tr><th>6</th><td>Respect <u>du</u> plan</td><td><u>Choisissez</u> <u>Oui</u> <u>ou</u> Non <u>après</u> <u>l’opération.</u> <u>Utilisez</u> <u>le</u> <u>commentaire</u> pour <u>documenter</u> <u>le</u> <u>contexte</u>, <u>les</u> <u>erreurs</u> <u>éventuelles</u> <u>et</u><br><u>les</u> <u>enseignements</u> <u>à</u> <u>retenir.</u></td></tr>
            <tr><th>7</th><td>Tableau <u>de</u> <u>bord</u></td><td><u>Consultez</u> <u>les</u> <u>indicateurs</u> <u>de</u> performance, la <u>synthèse</u> par <u>stratégie</u> <u>et</u> <u>les</u> <u>graphiques.</u> Pour <u>une</u> lecture <u>chronologique</u>,<br><u>triez</u> <u>le</u> journal par Date <u>d’entrée.</u></td></tr>
            <tr><th>8</th><td><u>Référentiels</u></td><td><u>Modifiez</u> <u>les</u> <u>taux</u> <u>de</u> commission <u>et</u> <u>les</u> <u>listes</u> <u>proposées</u> <u>selon</u> <u>votre</u> <u>méthode</u> <u>de</u> trading. Les commissions <u>du</u> journal <u>sont</u><br><u>recalculées</u> en <u>fonction</u> <u>du</u> <u>marché</u> <u>sélectionné.</u></td></tr>
            <tr><th>9</th><td>Formats</td><td>Les <u>prix</u> <u>et</u> <u>résultats</u> <u>sont</u> <u>affichés</u> en euros. Les dates <u>suivent</u> <u>le</u> format <u>JJ</u>/MM/<u>AAAA.</u> Les gains <u>sont</u> <u>mis</u> en <u>évidence</u> en vert<br><u>et</u> <u>les</u> <u>pertes</u> en rouge.</td></tr>
          </tbody>
          <tbody class="blank">
            <tr><th>10</th></tr><tr><th>11</th></tr><tr><th>12</th></tr><tr><th>13</th></tr><tr><th>14</th></tr><tr><th>15</th></tr><tr><th>16</th></tr><tr><th>17</th></tr><tr><th>18</th></tr><tr><th>19</th></tr><tr><th>20</th></tr><tr><th>21</th></tr><tr><th>22</th></tr><tr><th>23</th></tr><tr><th>24</th></tr>
          </tbody>
        </table>
      </div>
      <div class="vscroll"><div class="vthumb"></div></div>
    </div>
    <div class="hscroll"><div class="hthumb"></div><div class="hgrip"></div></div>
    <div class="tabs">
      <button class="navs" aria-label="Scroll sheets"><svg><use href="#navs"/></svg></button>
      <button class="addsheet" aria-label="Add sheet"><svg><use href="#addsheet"/></svg></button>
      <button class="tab">Journal de trading</button><button class="tab">Tableau de bord</button><button class="tab">Référentiels</button><button class="tab current">Mode d’emploi</button>
    </div>
  </main>
  <aside class="sidebar">
    <button aria-label="Sidebar settings"><svg><use href="#burger"/></svg></button>
    <button aria-label="Properties"><svg><use href="#props"/></svg></button>
    <button aria-label="Styles"><svg><use href="#styles"/></svg></button>
    <button aria-label="Gallery"><svg><use href="#gallery"/></svg></button>
    <button aria-label="Navigator"><svg><use href="#navig"/></svg></button>
    <button aria-label="Functions"><svg><use href="#fx"/></svg></button>
    <span class="grip"><svg viewBox="0 0 4 6"><path d="M0 0v6l4-3z" fill="#fff"/></svg></span>
  </aside>
</div>

<footer class="status">
  <span class="s-doc"><svg><use href="#disk"/></svg></span>
  <span class="s-sheet">Sheet 4 of 4</span>
  <span class="s-sel">Selected: 1 row, 6 columns</span>
  <span class="s-style">PageStyle_Mode d'emploi</span>
  <span class="s-lang">English (USA)</span>
  <span class="s-gap"></span>
  <span class="s-mode"><svg viewBox="0 0 22 12"><path d="M1 3h11v6H1z" fill="#fff" stroke="#4d9fc9"/><path d="M15 1h2l.5.500.5-.500h2M15 11.500h2l.5-.500.5.500h2M17.500 1v10" fill="none" stroke="#333"/></svg></span>
  <span class="s-box"></span>
  <span class="s-box"></span>
  <span class="s-sum">Average: ; Sum: 0</span>
  <span class="s-zoom"><button aria-label="Zoom out"><svg viewBox="0 0 8 8"><path d="M1 4h6" stroke="#222" stroke-width="2"/></svg></button><input type="range" aria-label="Zoom" min="0" max="100" value="48"><button aria-label="Zoom in"><svg viewBox="0 0 8 8"><path d="M1 4h6M4 1v6" stroke="#222" stroke-width="2"/></svg></button></span>
  <span class="s-pct">100%</span>
</footer>
</body>
</html>
```
FILE: styles.css
```css
* { box-sizing: border-box; }
body {
  margin: 0;
  height: 100vh;
  display: flex;
  flex-direction: column;
  overflow: hidden;
  background: #f6f5f4;
  color: #333;
  font-family: "Noto Sans", sans-serif;
  font-size: 8px;
}
button, input {
  margin: 0;
  padding: 0;
  border: 0;
  background: none;
  color: inherit;
  font: inherit;
}
svg { display: block; }
.defs { position: absolute; width: 0; height: 0; }

/* Menus and toolbars */
.menubar {
  display: flex;
  align-items: center;
  gap: 11px;
  height: 17px;
  padding: 0 7px 0 6px;
  border-bottom: 1px solid #e6e5e3;
  font-size: 9px;
}
.close { margin-left: auto; }
.close svg { width: 7px; height: 7px; }
.toolbar {
  display: flex;
  align-items: center;
  height: 27px;
  padding-left: 2px;
}
.tool {
  flex: none;
  display: grid;
  place-items: center;
  width: 22px;
  height: 24px;
  border-radius: 3px;
  color: #444;
}
.tool svg { width: 15px; height: 15px; overflow: visible; }
.tool.spell { align-content: center; font-size: 9px; line-height: 8px; }
.tool.spell svg { height: 7px; }
.on { background: #d3d0cc; border-radius: 3px; }
.pair { display: flex; }
.drop {
  flex: none;
  display: grid;
  place-items: center;
  width: 7px;
  height: 24px;
  color: #222;
}
.drop svg { width: 5px; height: 3px; }
.tool:disabled, .drop:disabled { color: #bbb; }
.sep {
  flex: none;
  width: 1px;
  height: 20px;
  margin: 0 2px;
  background: #e2e1df;
}
.wide { margin: 0 3px; }

.combo {
  flex: none;
  display: flex;
  height: 23px;
  border: 1px solid #cdc7c2;
  border-radius: 3px;
  background: #fff;
  font-size: 9px;
}
.combo input {
  flex: 1;
  min-width: 0;
  padding-left: 6px;
}
.combo button {
  display: grid;
  place-items: center;
  width: 24px;
  border-left: 1px solid #d9d5d1;
  border-radius: 0 3px 3px 0;
  background: #f8f7f6;
}
.combo svg, .expand svg { width: 8px; height: 5px; }
.font { width: 138px; margin-right: 6px; }
.font input { font-style: italic; }
.size { width: 67px; margin-right: 5px; }
.name { width: 108px; }

/* Work area */
.work { flex: 1; min-height: 0; display: flex; }
.main {
  flex: 1;
  min-width: 0;
  display: flex;
  flex-direction: column;
}
.formulabar {
  display: flex;
  align-items: center;
  height: 29px;
  padding: 0 5px 3px 2px;
}
.ftool {
  flex: none;
  display: grid;
  place-items: center;
  width: 16px;
  height: 24px;
}
.ftool svg { width: 12px; height: 14px; }
.formula {
  flex: 1;
  min-width: 0;
  height: 17px;
  margin-left: 1px;
  padding-left: 4px;
  border: 1px solid #d5d2cf;
  background: #fff;
  color: #444;
  font-size: 9px;
}
.expand { width: 10px; display: grid; place-items: center; color: #222; }
.gridrow { flex: 1; min-height: 0; display: flex; }
.sheet {
  flex: 1;
  min-width: 0;
  overflow: hidden;
  background: #fff;
}
.cells {
  width: 1171px;
  table-layout: fixed;
  border-collapse: separate;
  border-spacing: 0;
}
.c-head { width: 22px; }
.c-a { width: 114px; }
.c-b { width: 501px; }
.c-w { width: 42px; }
.c-n { width: 41px; }
.cells td, .cells th { padding: 0; }
.cells th {
  border-right: 1px solid #bcbbb9;
  border-bottom: 1px solid #bcbbb9;
  background: #e0dfde;
  color: #444;
  font-weight: 400;
  font-size: 9px;
  line-height: 12px;
}
.cells thead th { height: 14px; border-top: 1px solid #bcbbb9; line-height: 12px; }
.cells .corner { background: #f6f5f4; }
.cells .sel, .cells thead .sel {
  border-color: #2f78d0;
  background: #3584e4;
  color: #fff;
  font-weight: 700;
}
.r1 { height: 28px; }
.r2 { height: 13px; }
.r3 { height: 15px; }
.cells .r3 th, .cells .r3 td { border-bottom: 1px solid #333; }
.cells .title { background: #666; }
.cursor {
  position: relative;
  height: 26px;
  margin: 0 1px 2px 0;
  border: 1px solid #fff;
  background: #11766c;
  color: #fff;
  font-size: 13px;
  font-weight: 700;
  line-height: 25px;
  text-align: center;
}
.handle {
  position: absolute;
  right: -3px;
  bottom: -4px;
  width: 4px;
  height: 4px;
  border: 1px solid #fff;
  border-width: 1px 0 0 1px;
  background: #555;
}
.cells .head {
  background: #11766c;
  color: #fff;
  font-size: 10px;
  font-weight: 700;
  line-height: 14px;
  text-align: center;
}
.head + .head { border-left: 1px solid #7fb5af; }
.data tr { height: 44px; }
.cells .data th { padding-top: 1px; }
.cells .data td {
  padding: 2px 0 0 1px;
  border-right: 1px solid #dcdfe0;
  border-bottom: 1px solid #dcdfe0;
  color: #374151;
  font-family: Roboto, "Noto Sans", sans-serif;
  font-size: 9px;
  line-height: 12px;
  white-space: nowrap;
}
.data tr:nth-child(odd) td { background: #effefb; }
.blank tr { height: 14px; }
.blank tr:nth-child(5n) { height: 13px; }
.cells .blank th { padding-top: 1px; line-height: 11px; }
u {
  text-decoration: underline wavy #e0444a 1px;
  text-decoration-skip-ink: none;
  text-underline-offset: -1px;
}

/* Scrollbars */
.vscroll { width: 9px; padding: 2px 2px 0 2px; background: #cdcdcd; }
.vthumb { height: 47%; border-radius: 3px; background: #808080; }
.hscroll {
  display: flex;
  align-items: center;
  justify-content: space-between;
  height: 10px;
  margin-right: 9px;
  padding: 0 1px 0 2px;
  background: #cdcdcd;
}
.hthumb { width: 46%; height: 6px; border-radius: 3px; background: #808080; }
.hgrip { width: 2px; height: 6px; background: #444; }

/* Sheet tabs */
.tabs { display: flex; align-items: center; height: 16px; padding-left: 5px; }
.navs svg { width: 62px; height: 14px; }
.addsheet { margin: 0 5px 0 7px; }
.addsheet svg { width: 13px; height: 15px; }
.tab {
  height: 16px;
  padding: 0 10px 2px;
  color: #444;
}
.tab + .tab { border-left: 1px solid #d5d2cf; }
.tab.current {
  padding: 0 8px;
  border-left: 0;
  border-bottom: 2px solid #808080;
  background: #fff;
  color: #222;
  font-weight: 700;
}

/* Sidebar */
.sidebar {
  position: relative;
  display: flex;
  flex-direction: column;
  width: 39px;
  border-left: 1px solid #ccc;
}
.sidebar button {
  display: grid;
  place-items: center;
  height: 29px;
}
.sidebar button svg { width: 15px; height: 15px; }
.grip {
  position: absolute;
  left: -1px;
  top: calc(50% - 25px);
  display: grid;
  align-items: center;
  width: 5px;
  height: 50px;
  background: #929292;
}
.grip svg { width: 3px; height: 5px; }

/* Status bar */
.status {
  display: flex;
  height: 17px;
  border-top: 1px solid #ccc;
  color: #444;
}
.status > span {
  display: flex;
  align-items: center;
  padding-left: 5px;
  border-right: 1px solid #e2e1df;
  white-space: nowrap;
}
.s-doc { width: 22px; }
.s-doc svg { width: 12px; height: 12px; }
.s-sheet { width: 154px; }
.s-sel { width: 214px; }
.s-style { width: 224px; }
.status .s-lang { width: 162px; padding: 0; justify-content: center; }
.s-gap { flex: 1; }
.status .s-mode { width: 30px; padding-left: 6px; }
.s-mode svg { width: 22px; height: 12px; }
.s-box { width: 20px; }
.status .s-sum { width: 180px; padding-left: 4px; justify-content: center; }
.s-zoom { width: 96px; gap: 3px; }
.s-zoom svg { width: 8px; height: 8px; }
.s-zoom input { appearance: none; width: 66px; height: 10px; }
.s-zoom input::-webkit-slider-runnable-track {
  height: 7px;
  background: linear-gradient(#999, #999) center / 100% 1px no-repeat;
}
.s-zoom input::-webkit-slider-thumb {
  appearance: none;
  width: 3px;
  height: 7px;
  border: 1px solid #555;
  background: #eee;
}
.status .s-pct { width: 33px; border: 0; }
```
